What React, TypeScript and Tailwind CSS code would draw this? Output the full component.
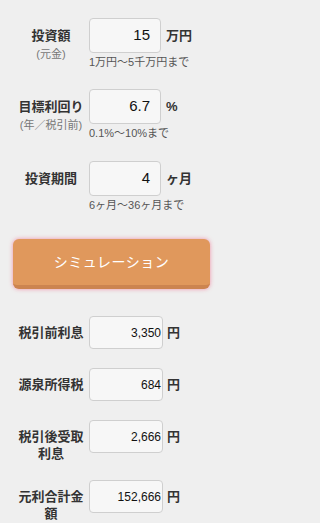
import React from 'react'

const FONT = '"Liberation Sans", "Noto Sans CJK JP", sans-serif'

interface InputRowProps {
  label: string
  sub?: string
  value: string
  unit: string
  hint: string
  className?: string
}

function InputRow({ label, sub, value, unit, hint, className = '' }: InputRowProps) {
  return (
    <div className={`flex items-start ${className}`}>
      <div className="w-[68px] ml-[17px] text-center">
        <div className="h-[35px] flex items-center justify-center text-[13px] font-bold text-[#333]">
          {label}
        </div>
        {sub && <div className="-mt-[6px] text-[11px] leading-[14px] text-[#777]">{sub}</div>}
      </div>
      <div className="ml-[4px]">
        <div className="flex items-center">
          <div className="w-[72px] h-[35px] flex items-center justify-end pr-[10px] rounded-[4px] border border-[#cfcfcf] bg-[#f7f7f7] text-[15px] text-[#111]">
            {value}
          </div>
          <span className="ml-[5px] text-[13px] font-bold text-[#333]">{unit}</span>
        </div>
        <div className="mt-[2px] text-[11px] leading-[14px] text-[#555] whitespace-nowrap">{hint}</div>
      </div>
    </div>
  )
}

interface ResultRowProps {
  label: string
  value: string
  className?: string
}

function ResultRow({ label, value, className = '' }: ResultRowProps) {
  return (
    <div className={`flex items-start ${className}`}>
      <div className="w-[68px] ml-[17px] pt-[8px] text-center text-[13px] leading-[17px] font-bold text-[#333]">
        {label}
      </div>
      <div className="ml-[4px] flex items-center">
        <div className="w-[74px] h-[33px] flex items-center justify-end pr-[1px] rounded-[4px] border border-[#cfcfcf] bg-[#f7f7f7] text-[12px] text-[#111]">
          {value}
        </div>
        <span className="ml-[4px] text-[13px] font-bold text-[#333]">円</span>
      </div>
    </div>
  )
}

export default function App() {
  return (
    <div className="w-full min-h-screen bg-[#efefef]" style={{ fontFamily: FONT }}>
      <div className="w-[223px] min-h-[523px] pt-[18px]">
        <InputRow label="投資額" sub="(元金)" value="15" unit="万円" hint="1万円～5千万円まで" />
        <InputRow label="目標利回り" sub="(年／税引前)" value="6.7" unit="%" hint="0.1%～10%まで" className="mt-[20px]" />
        <InputRow label="投資期間" value="4" unit="ヶ月" hint="6ヶ月～36ヶ月まで" className="mt-[21px]" />

        <div className="px-[13px] mt-[27px]">
          <button className="w-full h-[50px] rounded-[6px] bg-[#e0985c] border-b-[4px] border-[#cc8450] shadow-[0_0_4px_rgba(240,120,150,0.8)] text-white text-[14px] tracking-[0.5px]">
            シミュレーション
          </button>
        </div>

        <div className="mt-[27px]">
          <ResultRow label="税引前利息" value="3,350" />
          <ResultRow label="源泉所得税" value="684" className="mt-[19px]" />
          <ResultRow label="税引後受取利息" value="2,666" className="mt-[19px]" />
          <ResultRow label="元利合計金額" value="152,666" className="mt-[18px]" />
        </div>
      </div>
    </div>
  )
}
